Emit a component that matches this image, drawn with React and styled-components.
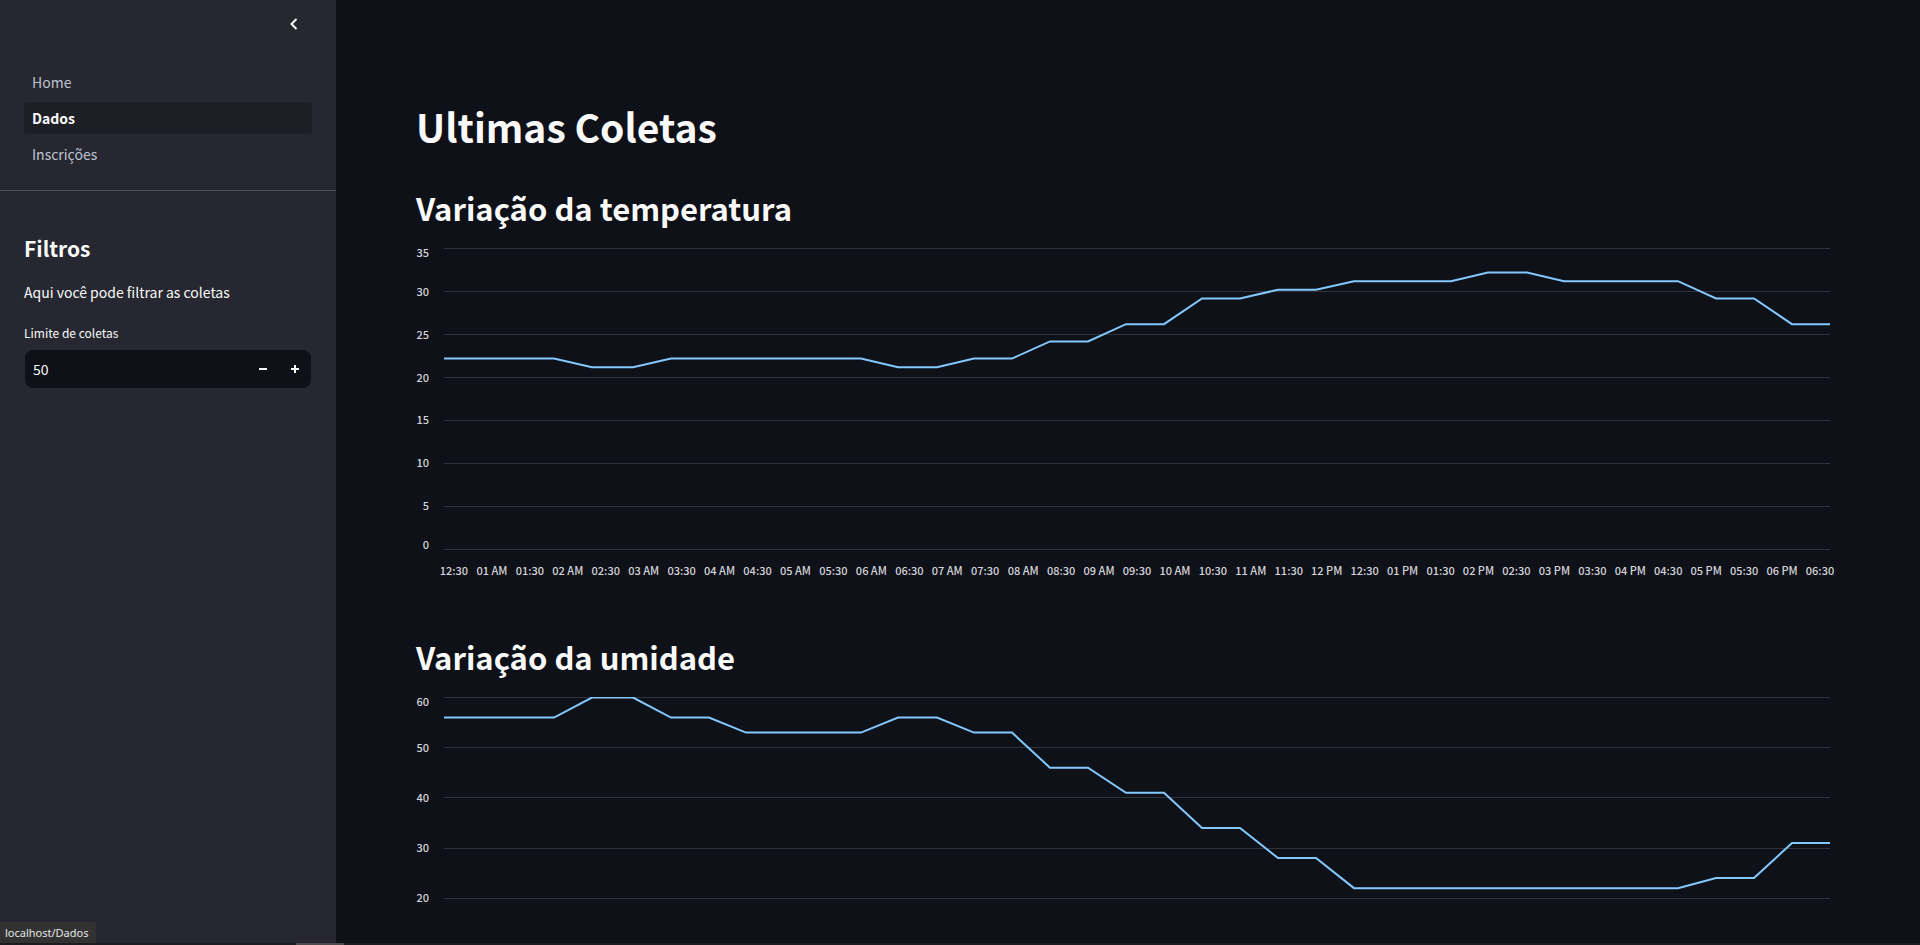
import React, { useState } from "react";
import styled, { createGlobalStyle } from "styled-components";

const GlobalStyle = createGlobalStyle`
  * { box-sizing: border-box; }
  body {
    margin: 0;
    background: #0e1117;
    color: #fafafa;
    font-family: "Noto Sans CJK SC", "Noto Sans", sans-serif;
    font-size: 14px;
  }
  h1, h2, p { margin: 0; }
`;

const Shell = styled.div`
  display: flex;
  height: 100vh;
  overflow: hidden;
`;

const Sidebar = styled.aside`
  flex: 0 0 336px;
  background: #262730;
`;

const SidebarHeader = styled.header`
  display: flex;
  justify-content: flex-end;
  padding: 8px 26px 26px;
`;

const CollapseButton = styled.button`
  display: grid;
  place-items: center;
  width: 32px;
  height: 32px;
  padding: 0;
  border: 0;
  background: none;
  color: #fafafa;
`;

const PageNav = styled.nav`
  display: flex;
  flex-direction: column;
  gap: 4px;
  padding: 0 24px 20px;
  border-bottom: 1px solid #4b4c54;
`;

const PageLink = styled.a`
  padding: 0 8px;
  border-radius: 4px;
  line-height: 32px;
  text-decoration: none;
  color: ${(p) => (p.$active ? "#fafafa" : "#bfc5d0")};
  font-weight: ${(p) => (p.$active ? 700 : 400)};
  background: ${(p) => (p.$active ? "#1e1e26" : "transparent")};
`;

const Filters = styled.section`
  display: flex;
  flex-direction: column;
  padding: 41px 24px;
`;

const FilterTitle = styled.h2`
  font-size: 21px;
  line-height: 32px;
  font-weight: 700;
`;

const FilterText = styled.p`
  margin: 16px 0 19px;
  line-height: 24px;
`;

const FieldLabel = styled.label`
  margin-bottom: 7px;
  font-size: 12px;
  line-height: 20px;
`;

const NumberField = styled.div`
  display: flex;
  height: 38px;
  margin: 0 1px;
  border-radius: 8px;
  overflow: hidden;
  background: #0e1117;
`;

const NumberInput = styled.input`
  flex: 1;
  min-width: 0;
  padding: 0 8px;
  border: 0;
  outline: 0;
  background: none;
  color: #fafafa;
  font: inherit;
  appearance: textfield;
  &::-webkit-inner-spin-button { display: none; }
`;

const StepButton = styled.button`
  display: grid;
  place-items: center;
  width: 32px;
  padding: 0;
  border: 0;
  background: none;
  color: #fafafa;
`;

const Main = styled.main`
  flex: 1;
  min-width: 0;
  padding: 102px 80px 160px;
  overflow-y: auto;
  scrollbar-width: none;
`;

const PageTitle = styled.h1`
  margin-bottom: 38px;
  font-size: 39px;
  line-height: 48px;
  font-weight: 700;
`;

const ChartSection = styled.section`
  margin-bottom: 59px;
`;

const ChartTitle = styled.h2`
  margin-bottom: 20px;
  font-size: 31px;
  line-height: 40px;
  font-weight: 700;
`;

const PlotRow = styled.div`
  display: flex;
  gap: 15px;
  height: 302px;
  padding-right: 10px;
`;

const YAxis = styled.div`
  display: flex;
  flex-direction: column;
  width: 13px;
  padding-bottom: 2px;
`;

const YTick = styled.div`
  display: flex;
  flex: 2 1 0;
  min-height: 0;
  justify-content: flex-end;
  align-items: center;
  font-size: 11px;
  line-height: 8px;
  font-weight: 500;
  color: #d3d4d9;
  &:first-child { flex-grow: 1; align-items: flex-start; }
  &:last-child { flex-grow: 1; align-items: flex-end; }
`;

const Plot = styled.svg`
  flex: 1;
  min-width: 0;
  height: 302px;
`;

const XAxis = styled.div`
  display: grid;
  grid-template-columns: repeat(37, minmax(0, 1fr));
  margin: 12px 1px 0 19px;
  font-size: 11px;
  line-height: 16px;
  font-weight: 500;
  color: #d3d4d9;
`;

const XTick = styled.span`
  display: flex;
  justify-content: center;
  white-space: nowrap;
`;

const StatusBubble = styled.div`
  position: fixed;
  left: 0;
  bottom: 2px;
  padding: 0 8px 0 5px;
  border-top-right-radius: 3px;
  background: #323232;
  color: #e6e6e6;
  font-family: "Noto Sans", sans-serif;
  font-size: 11px;
  line-height: 21px;
`;

const BottomEdge = styled.div`
  position: fixed;
  left: 0;
  right: 0;
  bottom: 0;
  height: 2px;
  padding-left: 296px;
  background: #1d1c1f;
`;

const EdgeHandle = styled.div`
  width: 48px;
  height: 2px;
  background: #4d4b4c;
`;

const PLOT_WIDTH = 1386;
const PLOT_HEIGHT = 301;

const pages = ["Home", "Dados", "Inscrições"];

const hours = Array.from({ length: 37 }, (_, i) => {
  const half = i + 1;
  const hour = Math.floor(half / 2);
  const shown = String(hour % 12 || 12).padStart(2, "0");
  if (half % 2) return `${shown}:30`;
  return `${shown} ${hour < 12 ? "AM" : "PM"}`;
});

const temperature = [
  [0, 22.2], [110, 22.2], [148, 21.2], [189, 21.2], [227, 22.2], [417, 22.2],
  [454, 21.2], [493, 21.2], [530, 22.2], [568, 22.2], [606, 24.2], [644, 24.2],
  [682, 26.2], [720, 26.2], [758, 29.2], [796, 29.2], [834, 30.2], [872, 30.2],
  [910, 31.2], [1007, 31.2], [1044, 32.2], [1083, 32.2], [1120, 31.2],
  [1234, 31.2], [1272, 29.2], [1310, 29.2], [1348, 26.2], [1386, 26.2],
];

const humidity = [
  [0, 56], [110, 56], [148, 60], [189, 60], [227, 56], [265, 56], [302, 53],
  [417, 53], [454, 56], [493, 56], [530, 53], [568, 53], [606, 46], [644, 46],
  [682, 41], [720, 41], [758, 34], [796, 34], [834, 28], [872, 28], [910, 22],
  [1234, 22], [1272, 24], [1310, 24], [1348, 31], [1386, 31],
];

function LineChart({ title, max, step, labelFrom = 0, xLabels = [], points }) {
  const ticks = [];
  for (let value = max; value >= 0; value -= step) ticks.push(value);
  const y = (value) => PLOT_HEIGHT * (1 - value / max) + 0.5;
  const path = points.map(([px, value]) => `${px},${y(value)}`).join(" ");

  return (
    <ChartSection>
      <ChartTitle>{title}</ChartTitle>
      <PlotRow>
        <YAxis>
          {ticks.map((value) => (
            <YTick key={value}>{value >= labelFrom && value}</YTick>
          ))}
        </YAxis>
        <Plot
          viewBox={`0 0 ${PLOT_WIDTH} ${PLOT_HEIGHT + 1}`}
          preserveAspectRatio="none"
          role="img"
          aria-label={title}
        >
          {ticks.map((value) => (
            <rect
              key={value}
              x="0"
              y={Math.floor(y(value))}
              width={PLOT_WIDTH}
              height="1"
              fill="#31333c"
            />
          ))}
          <polyline
            points={path}
            fill="none"
            stroke="#83c9ff"
            strokeWidth="2"
            vectorEffect="non-scaling-stroke"
          />
        </Plot>
      </PlotRow>
      <XAxis>
        {xLabels.map((label, i) => (
          <XTick key={i}>{label}</XTick>
        ))}
      </XAxis>
    </ChartSection>
  );
}

export default function App() {
  const [limit, setLimit] = useState(50);

  return (
    <>
      <GlobalStyle />
      <Shell>
        <Sidebar>
          <SidebarHeader>
            <CollapseButton type="button" aria-label="Fechar menu">
              <svg width="8" height="12" viewBox="0 0 8 12">
                <path d="M6.5 1 L1.5 6 L6.5 11" fill="none" stroke="currentColor" strokeWidth="2" />
              </svg>
            </CollapseButton>
          </SidebarHeader>
          <PageNav>
            {pages.map((page) => (
              <PageLink key={page} href={`#${page}`} $active={page === "Dados"}>
                {page}
              </PageLink>
            ))}
          </PageNav>
          <Filters>
            <FilterTitle>Filtros</FilterTitle>
            <FilterText>Aqui você pode filtrar as coletas</FilterText>
            <FieldLabel htmlFor="limit">Limite de coletas</FieldLabel>
            <NumberField>
              <NumberInput
                id="limit"
                type="number"
                value={limit}
                onChange={(e) => setLimit(Number(e.target.value))}
              />
              <StepButton type="button" aria-label="Diminuir" onClick={() => setLimit(limit - 1)}>
                <svg width="8" height="8" viewBox="0 0 8 8">
                  <path d="M0 3h8v2H0z" fill="currentColor" />
                </svg>
              </StepButton>
              <StepButton type="button" aria-label="Aumentar" onClick={() => setLimit(limit + 1)}>
                <svg width="8" height="8" viewBox="0 0 8 8">
                  <path d="M3 0h2v3h3v2H5v3H3V5H0V3h3z" fill="currentColor" />
                </svg>
              </StepButton>
            </NumberField>
          </Filters>
        </Sidebar>
        <Main>
          <PageTitle>Ultimas Coletas</PageTitle>
          <LineChart
            title="Variação da temperatura"
            max={35}
            step={5}
            xLabels={hours}
            points={temperature}
          />
          <LineChart
            title="Variação da umidade"
            max={60}
            step={10}
            labelFrom={20}
            points={humidity}
          />
        </Main>
      </Shell>
      <StatusBubble>localhost/Dados</StatusBubble>
      <BottomEdge>
        <EdgeHandle />
      </BottomEdge>
    </>
  );
}
